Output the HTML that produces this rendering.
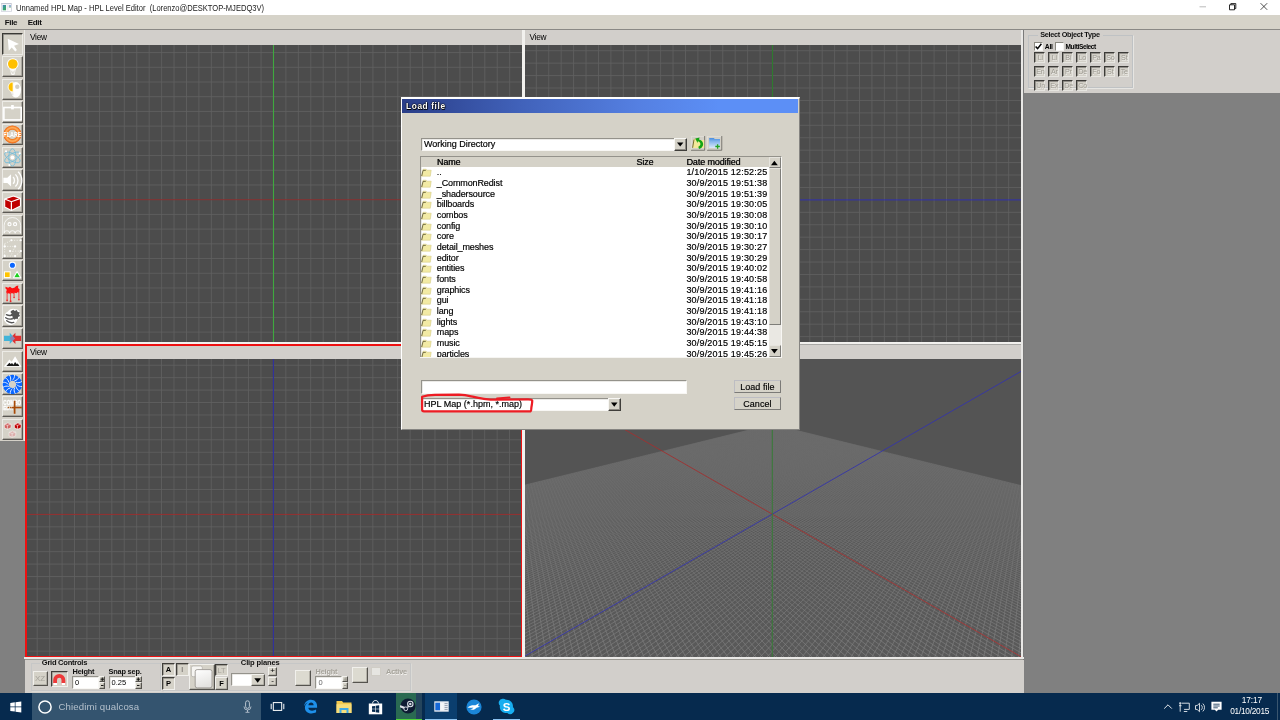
<!DOCTYPE html>
<html><head><meta charset="utf-8"><title>Unnamed HPL Map - HPL Level Editor</title>
<style>
*{box-sizing:border-box;margin:0;padding:0}
html,body{width:1280px;height:720px;overflow:hidden;background:#808080;font-family:"Liberation Sans",sans-serif;font-size:9px;color:#000}
body{position:relative}
.a{position:absolute}
.vp{position:absolute;display:block}
.face{background:#d4d0c8}
.t{position:absolute;white-space:pre;line-height:1}
.sunk{border:1px solid;border-color:#94928b #f8f7f4 #f8f7f4 #94928b;box-shadow:inset 0.5px 0.5px 0 #d8d6d0}
.rais{background:#d5d2c8;border:1px solid;border-color:#f8f7f4 #3f3e3a #3f3e3a #f8f7f4;box-shadow:inset -1px -1px 0 #8d8a83}
.hd{font-size:9px;letter-spacing:-0.12px;color:#111;text-shadow:0.35px 0 0 #111}
.rw{font-size:9px;letter-spacing:0.19px;color:#000;-webkit-text-stroke:0.18px #000}
.nm{letter-spacing:-0.12px}
.btn{background:#d6d3c9;border-style:solid;border-width:0.8px 1.3px 1.3px 0.8px;border-color:#bdbdc3 #7b7a77 #7b7a77 #bdbdc3;font-size:9px;text-align:center;line-height:12.300px;letter-spacing:0.050px;color:#000;-webkit-text-stroke:0.15px #000}
.tbr{background:#d5d2c8;border:1px solid;border-color:#ecebe6 #5a5853 #5a5853 #ecebe6;box-shadow:inset -0.7px -0.7px 0 #9a978f}
.tbp{background:#d5d2c8;border:1px solid;border-color:#3a3935 #ecebe6 #ecebe6 #3a3935;box-shadow:inset 0.7px 0.7px 0 #7d7b75}
.ob{width:11.200px;height:11.200px;background:#d2cfc7;border:1px solid;border-color:#3c3b38 #e6e5e0 #e6e5e0 #3c3b38;box-shadow:inset 0.7px 0.7px 0 #7d7b75;font-size:7.2px;line-height:10px;text-align:center;color:#9d9a92;letter-spacing:-0.2px;text-shadow:0.5px 0.5px 0 #efeeea;padding-left:1px}
.rb{background:#d5d2c8;border:1px solid;border-color:#f1f0ec #55534e #55534e #f1f0ec;box-shadow:inset -0.6px -0.6px 0 #9a978f}
.pb{background:#d5d2c8;border:1px solid;border-color:#3f3e3a #f1f0ec #f1f0ec #3f3e3a;box-shadow:inset 0.6px 0.6px 0 #8d8a83}
.lb{font-size:7.4px;font-weight:bold;letter-spacing:-0.2px;color:#111}
#root{position:absolute;left:0;top:0;width:1280px;height:720px;will-change:transform}
.sb{background:#d5d2c8;border-style:solid;border-width:0.7px 1.2px 1.2px 0.7px;border-color:#e6e4de #7e7d79 #7e7d79 #e6e4de}
.pb2{background:#d5d2c8;border-style:solid;border-width:1.300px 0.800px 0.800px 1.300px;border-color:#3f3e3a #f1f0ec #f1f0ec #3f3e3a;box-shadow:inset 0.700px 0.700px 0 #8d8a83}

</style></head><body><div id="root">
<div class="a" style="left:0;top:0;width:1280px;height:15px;background:#fff"></div>
<svg class="a" style="left:1px;top:2.800px" width="10.800" height="9" viewBox="0 0 10.800 9"><defs><linearGradient id="ig" x1="0" y1="0" x2="0.600" y2="1"><stop offset="0" stop-color="#4a78c0"/><stop offset="0.500" stop-color="#3a9a8a"/><stop offset="1" stop-color="#3aa860"/></linearGradient><linearGradient id="ig2" x1="0" y1="0" x2="0" y2="1"><stop offset="0" stop-color="#7a9ad8"/><stop offset="1" stop-color="#b8dcb0"/></linearGradient></defs><rect x="0.300" y="0.300" width="10.200" height="8.400" rx="0.600" fill="#fdfdfe" stroke="#c3c7d3" stroke-width="0.700"/><path d="M0.400 0.700h10" stroke="#b4b9c8" stroke-width="0.800"/><rect x="1.700" y="2" width="3.300" height="5.300" fill="url(#ig)"/><rect x="5.600" y="2" width="1.900" height="5.300" fill="#ececf0"/><rect x="7.900" y="2.200" width="2.100" height="2.700" fill="url(#ig2)"/></svg>
<div class="t" style="left:15.700px;top:3.500px;font-size:8.900px;transform:scaleX(0.853);transform-origin:0 0;color:#1a1a1a">Unnamed HPL Map - HPL Level Editor  (Lorenzo@DESKTOP-MJEDQ3V)</div>
<svg class="a" style="left:1195px;top:0" width="85" height="15" viewBox="0 0 85 15"><path d="M4.5 6.8H11" stroke="#aaa" stroke-width="0.8"/><path d="M34.5 4.8h5v5h-5zM35.8 4.8V3.6h5v5h-1.3" fill="none" stroke="#111" stroke-width="0.9"/><path d="M65.6 3.2l6.6 6.6M72.2 3.2l-6.6 6.6" stroke="#222" stroke-width="0.8"/></svg>
<div class="a" style="left:0;top:15px;width:1280px;height:15px;background:#d6d3c9"></div>
<div class="a" style="left:0;top:29px;width:1280px;height:1px;background:#8a8985"></div>
<div class="t" style="left:4.7px;top:19px;font-size:8px;font-weight:bold;letter-spacing:-0.3px;color:#111">File</div>
<div class="t" style="left:27.7px;top:19px;font-size:8px;font-weight:bold;letter-spacing:-0.3px;color:#111">Edit</div>
<!-- toolbar column -->
<div class="a face" style="left:0;top:30px;width:25px;height:411px"></div>
<div class="a" style="left:23.500px;top:30px;width:1.500px;height:411px;background:#e9e8e4"></div>
<!-- viewport headers -->
<div class="a" style="left:25px;top:30px;width:497px;height:15px;background:#d2cfcb"></div>
<div class="t" style="left:30px;top:32.700px;font-size:8.300px;letter-spacing:-0.300px">View</div>
<div class="a" style="left:522px;top:30px;width:3px;height:630px;background:#f2f1ee"></div>
<div class="a" style="left:525px;top:30px;width:496px;height:15px;background:#d2cfcb"></div>
<div class="t" style="left:529.5px;top:32.700px;font-size:8.300px;letter-spacing:-0.300px">View</div>
<div class="a" style="left:24px;top:342px;width:1000px;height:2px;background:#f2f1ee"></div>
<div class="a" style="left:525px;top:344px;width:496px;height:15px;background:#d2cfcb"></div>
<div class="a" style="left:525px;top:343.500px;width:496px;height:1px;background:#a9a8a5"></div>
<div class="t" style="left:529.5px;top:347.500px;font-size:8.300px;letter-spacing:-0.300px">View</div>
<!-- active viewport (red border) -->
<div class="a" style="left:25px;top:344px;width:497px;height:313px;background:#ee1111"></div>
<div class="a" style="left:27px;top:346px;width:494px;height:13px;background:#d2cfcb"></div>
<div class="t" style="left:30px;top:347.500px;font-size:8.300px;letter-spacing:-0.300px">View</div>
<!-- right strip -->
<div class="a" style="left:1021px;top:30px;width:3px;height:630px;background:#e9e8e6"></div>
<div class="a" style="left:1023px;top:30px;width:1px;height:630px;background:#7a7a7a"></div>
<div class="a" style="left:24px;top:657px;width:1000px;height:2px;background:#e9e8e6"></div>

<svg class="vp" style="left:25px;top:45px" width="497" height="297" viewBox="0 0 497 297"><rect width="497" height="297" fill="#4c4c4c"/><path d="M12.33 0V297M24.76 0V297M37.19 0V297M49.62 0V297M62.05 0V297M74.48 0V297M86.91 0V297M99.34 0V297M111.77 0V297M124.20 0V297M136.63 0V297M149.06 0V297M161.49 0V297M173.92 0V297M186.35 0V297M198.78 0V297M211.21 0V297M223.64 0V297M236.07 0V297M260.93 0V297M273.36 0V297M285.79 0V297M298.22 0V297M310.65 0V297M323.08 0V297M335.51 0V297M347.94 0V297M360.37 0V297M372.80 0V297M385.23 0V297M397.66 0V297M410.09 0V297M422.52 0V297M434.95 0V297M447.38 0V297M459.81 0V297M472.24 0V297M484.67 0V297M0 7.60H497M0 22.31H497M0 37.02H497M0 51.73H497M0 66.44H497M0 81.15H497M0 95.86H497M0 110.57H497M0 125.28H497M0 139.99H497M0 169.41H497M0 184.12H497M0 198.83H497M0 213.54H497M0 228.25H497M0 242.96H497M0 257.67H497M0 272.38H497M0 287.09H497" stroke="#616161" stroke-width="0.85" fill="none"/><path d="M0 154.70H497" stroke="#8c2f2f" stroke-width="0.9"/><path d="M248.50 0V297" stroke="#3fa83f" stroke-width="1.1"/></svg><svg class="vp" style="left:525px;top:45px" width="496" height="297" viewBox="0 0 496 297"><rect width="496" height="297" fill="#4c4c4c"/><path d="M11.33 0V297M23.76 0V297M36.19 0V297M48.62 0V297M61.05 0V297M73.48 0V297M85.91 0V297M98.34 0V297M110.77 0V297M123.20 0V297M135.63 0V297M148.06 0V297M160.49 0V297M172.92 0V297M185.35 0V297M197.78 0V297M210.21 0V297M222.64 0V297M235.07 0V297M259.93 0V297M272.36 0V297M284.79 0V297M297.22 0V297M309.65 0V297M322.08 0V297M334.51 0V297M346.94 0V297M359.37 0V297M371.80 0V297M384.23 0V297M396.66 0V297M409.09 0V297M421.52 0V297M433.95 0V297M446.38 0V297M458.81 0V297M471.24 0V297M483.67 0V297M0 5.74H496M0 18.17H496M0 30.60H496M0 43.03H496M0 55.46H496M0 67.89H496M0 80.32H496M0 92.75H496M0 105.18H496M0 117.61H496M0 130.04H496M0 142.47H496M0 167.33H496M0 179.76H496M0 192.19H496M0 204.62H496M0 217.05H496M0 229.48H496M0 241.91H496M0 254.34H496M0 266.77H496M0 279.20H496M0 291.63H496" stroke="#616161" stroke-width="0.85" fill="none"/><path d="M0 154.90H496" stroke="#2c2cb8" stroke-width="0.9"/><path d="M247.50 0V297" stroke="#2f7a2f" stroke-width="1.1"/></svg><svg class="vp" style="left:27px;top:359px" width="494" height="297" viewBox="0 0 494 297"><rect width="494" height="297" fill="#4c4c4c"/><path d="M10.23 0V297M22.66 0V297M35.09 0V297M47.52 0V297M59.95 0V297M72.38 0V297M84.81 0V297M97.24 0V297M109.67 0V297M122.10 0V297M134.53 0V297M146.96 0V297M159.39 0V297M171.82 0V297M184.25 0V297M196.68 0V297M209.11 0V297M221.54 0V297M233.97 0V297M258.83 0V297M271.26 0V297M283.69 0V297M296.12 0V297M308.55 0V297M320.98 0V297M333.41 0V297M345.84 0V297M358.27 0V297M370.70 0V297M383.13 0V297M395.56 0V297M407.99 0V297M420.42 0V297M432.85 0V297M445.28 0V297M457.71 0V297M470.14 0V297M482.57 0V297M0 6.24H494M0 18.67H494M0 31.10H494M0 43.53H494M0 55.96H494M0 68.39H494M0 80.82H494M0 93.25H494M0 105.68H494M0 118.11H494M0 130.54H494M0 142.97H494M0 167.83H494M0 180.26H494M0 192.69H494M0 205.12H494M0 217.55H494M0 229.98H494M0 242.41H494M0 254.84H494M0 267.27H494M0 279.70H494M0 292.13H494" stroke="#616161" stroke-width="0.85" fill="none"/><path d="M0 155.40H494" stroke="#a02c2c" stroke-width="0.9"/><path d="M246.40 0V297" stroke="#3030a0" stroke-width="1.1"/></svg><svg class="vp" style="left:525px;top:359px" width="496" height="298" viewBox="525 359 496 298"><defs><linearGradient id="gp" x1="0" y1="0" x2="0" y2="1"><stop offset="0" stop-color="#6e6e6e"/><stop offset="0.35" stop-color="#626262"/><stop offset="1" stop-color="#575757"/></linearGradient><linearGradient id="lg" gradientUnits="userSpaceOnUse" x1="0" y1="424" x2="0" y2="657"><stop offset="0" stop-color="#6a6a6a"/><stop offset="0.4" stop-color="#707070"/><stop offset="1" stop-color="#808080"/></linearGradient></defs><rect x="525" y="359" width="496" height="298" fill="#545454"/><polygon points="772.0,424.5 1137.1,514.0 1137.1,700 406.9,700 406.9,514.0" fill="#595959"/><path d="M772.0 424.5L520.0 486.3M772.0 424.5L1026.0 486.8M772.8 424.7L520.0 487.0M771.2 424.7L1026.0 487.5M773.6 424.9L520.0 487.8M770.4 424.9L1026.0 488.3M774.4 425.1L520.0 488.5M769.6 425.1L1026.0 489.0M775.2 425.3L520.0 489.3M768.8 425.3L1026.0 489.8M776.0 425.5L520.0 490.1M768.0 425.5L1026.0 490.6M776.8 425.7L520.0 490.8M767.2 425.7L1026.0 491.3M777.6 425.9L520.0 491.6M766.4 425.9L1026.0 492.1M778.4 426.1L520.0 492.4M765.6 426.1L1026.0 493.0M779.2 426.3L520.0 493.3M764.8 426.3L1026.0 493.8M780.0 426.5L520.0 494.1M764.0 426.5L1026.0 494.6M780.9 426.7L520.0 494.9M763.1 426.7L1026.0 495.4M781.7 426.9L520.0 495.8M762.3 426.9L1026.0 496.3M782.5 427.1L520.0 496.6M761.5 427.1L1026.0 497.1M783.4 427.3L520.0 497.5M760.6 427.3L1026.0 498.0M784.2 427.5L520.0 498.3M759.8 427.5L1026.0 498.9M785.1 427.7L520.0 499.2M758.9 427.7L1026.0 499.8M786.0 427.9L520.0 500.1M758.0 427.9L1026.0 500.7M786.8 428.1L520.0 501.0M757.2 428.1L1026.0 501.6M787.7 428.3L520.0 502.0M756.3 428.3L1026.0 502.5M788.6 428.6L520.0 502.9M755.4 428.6L1026.0 503.4M789.4 428.8L520.0 503.8M754.6 428.8L1026.0 504.4M790.3 429.0L520.0 504.8M753.7 429.0L1026.0 505.4M791.2 429.2L520.0 505.8M752.8 429.2L1026.0 506.3M792.1 429.4L520.0 506.8M751.9 429.4L1026.0 507.3M793.0 429.6L520.0 507.7M751.0 429.6L1026.0 508.3M793.9 429.9L520.0 508.8M750.1 429.9L1026.0 509.3M794.8 430.1L520.0 509.8M749.2 430.1L1026.0 510.4M795.8 430.3L520.0 510.8M748.2 430.3L1026.0 511.4M796.7 430.5L520.0 511.9M747.3 430.5L1026.0 512.5M797.6 430.8L520.0 512.9M746.4 430.8L1026.0 513.5M798.6 431.0L520.0 514.0M745.4 431.0L1026.0 514.6M799.5 431.2L520.0 515.1M744.5 431.2L1026.0 515.7M800.5 431.5L520.0 516.2M743.5 431.5L1026.0 516.8M801.4 431.7L520.0 517.3M742.6 431.7L1026.0 518.0M802.4 431.9L520.0 518.5M741.6 431.9L1026.0 519.1M803.3 432.2L520.0 519.7M740.7 432.2L1026.0 520.3M804.3 432.4L520.0 520.8M739.7 432.4L1026.0 521.4M805.3 432.7L520.0 522.0M738.7 432.7L1026.0 522.6M806.3 432.9L520.0 523.2M737.7 432.9L1026.0 523.9M807.3 433.1L520.0 524.5M736.7 433.1L1026.0 525.1M808.3 433.4L520.0 525.7M735.7 433.4L1026.0 526.3M809.3 433.6L520.0 527.0M734.7 433.6L1026.0 527.6M810.3 433.9L520.0 528.3M733.7 433.9L1026.0 528.9M811.3 434.1L520.0 529.6M732.7 434.1L1026.0 530.2M812.3 434.4L520.0 530.9M731.7 434.4L1026.0 531.6M813.4 434.6L520.0 532.2M730.6 434.6L1026.0 532.9M814.4 434.9L520.0 533.6M729.6 434.9L1026.0 534.3M815.4 435.1L520.0 535.0M728.6 435.1L1026.0 535.7M816.5 435.4L520.0 536.4M727.5 435.4L1026.0 537.1M817.6 435.7L520.0 537.8M726.4 435.7L1026.0 538.5M818.6 435.9L520.0 539.3M725.4 435.9L1026.0 540.0M819.7 436.2L520.0 540.8M724.3 436.2L1026.0 541.5M820.8 436.5L520.0 542.3M723.2 436.5L1026.0 543.0M821.9 436.7L520.0 543.8M722.1 436.7L1026.0 544.5M823.0 437.0L520.0 545.4M721.0 437.0L1026.0 546.1M824.1 437.3L520.0 546.9M719.9 437.3L1026.0 547.7M825.2 437.5L520.0 548.6M718.8 437.5L1026.0 549.3M826.3 437.8L520.0 550.2M717.7 437.8L1026.0 550.9M827.4 438.1L520.0 551.9M716.6 438.1L1026.0 552.6M828.6 438.4L520.0 553.5M715.4 438.4L1026.0 554.3M829.7 438.6L520.0 555.3M714.3 438.6L1026.0 556.0M830.9 438.9L520.0 557.0M713.1 438.9L1026.0 557.8M832.0 439.2L520.0 558.8M712.0 439.2L1026.0 559.6M833.2 439.5L520.0 560.6M710.8 439.5L1026.0 561.4M834.3 439.8L520.0 562.5M709.7 439.8L1026.0 563.3M835.5 440.1L520.0 564.4M708.5 440.1L1026.0 565.1M836.7 440.4L520.0 566.3M707.3 440.4L1026.0 567.1M837.9 440.7L520.0 568.2M706.1 440.7L1026.0 569.0M839.1 441.0L520.0 570.2M704.9 441.0L1026.0 571.0M840.3 441.2L520.0 572.2M703.7 441.2L1026.0 573.1M841.6 441.5L520.0 574.3M702.4 441.5L1026.0 575.1M842.8 441.9L520.0 576.4M701.2 441.9L1026.0 577.3M844.0 442.2L520.0 578.6M700.0 442.2L1026.0 579.4M845.3 442.5L520.0 580.8M698.7 442.5L1026.0 581.6M846.6 442.8L520.0 583.0M697.4 442.8L1026.0 583.9M847.8 443.1L520.0 585.3M696.2 443.1L1026.0 586.2M849.1 443.4L520.0 587.6M694.9 443.4L1026.0 588.5M850.4 443.7L520.0 590.0M693.6 443.7L1026.0 590.9M851.7 444.0L520.0 592.4M692.3 444.0L1026.0 593.3M853.0 444.4L520.0 594.9M691.0 444.4L1026.0 595.8M854.3 444.7L520.0 597.4M689.7 444.7L1026.0 598.3M855.7 445.0L520.0 600.0M688.3 445.0L1026.0 600.9M857.0 445.3L520.0 602.7M687.0 445.3L1026.0 603.6M858.3 445.7L520.0 605.4M685.7 445.7L1026.0 606.3M859.7 446.0L520.0 608.1M684.3 446.0L1026.0 609.1M861.1 446.3L520.0 610.9M682.9 446.3L1026.0 611.9M862.4 446.7L520.0 613.8M681.6 446.7L1026.0 614.8M863.8 447.0L520.0 616.8M680.2 447.0L1026.0 617.8M865.2 447.3L520.0 619.8M678.8 447.3L1026.0 620.8M866.6 447.7L520.0 622.9M677.4 447.7L1026.0 623.9M868.1 448.0L520.0 626.1M675.9 448.0L1026.0 627.1M869.5 448.4L520.0 629.3M674.5 448.4L1026.0 630.3M870.9 448.7L520.0 632.6M673.1 448.7L1026.0 633.7M872.4 449.1L520.0 636.0M671.6 449.1L1026.0 637.1M873.9 449.5L520.0 639.5M670.1 449.5L1026.0 640.6M875.3 449.8L520.0 643.1M668.7 449.8L1026.0 644.2M876.8 450.2L520.0 646.8M667.2 450.2L1026.0 647.9M878.3 450.6L520.0 650.6M665.7 450.6L1026.0 651.7M879.9 450.9L520.0 654.4M664.1 450.9L1026.0 655.6M881.4 451.3L520.0 658.4M662.6 451.3L1026.0 659.5M882.9 451.7L520.8 662.0M661.1 451.7L1023.2 662.0M884.5 452.1L527.9 662.0M659.5 452.1L1016.1 662.0M886.0 452.4L535.0 662.0M658.0 452.4L1009.0 662.0M887.6 452.8L542.1 662.0M656.4 452.8L1001.9 662.0M889.2 453.2L549.2 662.0M654.8 453.2L994.8 662.0M890.8 453.6L556.3 662.0M653.2 453.6L987.7 662.0M892.4 454.0L563.4 662.0M651.6 454.0L980.6 662.0M894.0 454.4L570.6 662.0M650.0 454.4L973.4 662.0M895.7 454.8L577.7 662.0M648.3 454.8L966.3 662.0M897.3 455.2L584.8 662.0M646.7 455.2L959.2 662.0M899.0 455.6L591.9 662.0M645.0 455.6L952.1 662.0M900.7 456.0L599.0 662.0M643.3 456.0L945.0 662.0M902.4 456.5L606.1 662.0M641.6 456.5L937.9 662.0M904.1 456.9L613.2 662.0M639.9 456.9L930.8 662.0M905.8 457.3L620.3 662.0M638.2 457.3L923.7 662.0M907.6 457.7L627.4 662.0M636.4 457.7L916.6 662.0M909.3 458.2L634.5 662.0M634.7 458.2L909.5 662.0M911.1 458.6L641.6 662.0M632.9 458.6L902.4 662.0M912.9 459.0L648.7 662.0M631.1 459.0L895.3 662.0M914.7 459.5L655.8 662.0M629.3 459.5L888.2 662.0M916.5 459.9L662.9 662.0M627.5 459.9L881.1 662.0M918.3 460.4L670.0 662.0M625.7 460.4L874.0 662.0M920.2 460.8L677.1 662.0M623.8 460.8L866.9 662.0M922.1 461.3L684.2 662.0M621.9 461.3L859.8 662.0M923.9 461.7L691.4 662.0M620.1 461.7L852.6 662.0M925.8 462.2L698.5 662.0M618.2 462.2L845.5 662.0M927.8 462.7L705.6 662.0M616.2 462.7L838.4 662.0M929.7 463.2L712.7 662.0M614.3 463.2L831.3 662.0M931.7 463.6L719.8 662.0M612.3 463.6L824.2 662.0M933.6 464.1L726.9 662.0M610.4 464.1L817.1 662.0M935.6 464.6L734.0 662.0M608.4 464.6L810.0 662.0M937.6 465.1L741.1 662.0M606.4 465.1L802.9 662.0M939.6 465.6L748.2 662.0M604.4 465.6L795.8 662.0M941.7 466.1L755.3 662.0M602.3 466.1L788.7 662.0M943.8 466.6L762.4 662.0M600.2 466.6L781.6 662.0M945.8 467.1L769.5 662.0M598.2 467.1L774.5 662.0M947.9 467.6L776.6 662.0M596.1 467.6L767.4 662.0M950.1 468.1L783.7 662.0M593.9 468.1L760.3 662.0M952.2 468.7L790.8 662.0M591.8 468.7L753.2 662.0M954.4 469.2L797.9 662.0M589.6 469.2L746.1 662.0M956.5 469.7L805.1 662.0M587.5 469.7L738.9 662.0M958.8 470.3L812.2 662.0M585.2 470.3L731.8 662.0M961.0 470.8L819.3 662.0M583.0 470.8L724.7 662.0M963.2 471.4L826.4 662.0M580.8 471.4L717.6 662.0M965.5 471.9L833.5 662.0M578.5 471.9L710.5 662.0M967.8 472.5L840.6 662.0M576.2 472.5L703.4 662.0M970.1 473.1L847.7 662.0M573.9 473.1L696.3 662.0M972.4 473.6L854.8 662.0M571.6 473.6L689.2 662.0M974.8 474.2L861.9 662.0M569.2 474.2L682.1 662.0M977.2 474.8L869.0 662.0M566.8 474.8L675.0 662.0M979.6 475.4L876.1 662.0M564.4 475.4L667.9 662.0M982.0 476.0L883.2 662.0M562.0 476.0L660.8 662.0M984.5 476.6L890.3 662.0M559.5 476.6L653.7 662.0M987.0 477.2L897.4 662.0M557.0 477.2L646.6 662.0M989.5 477.8L904.5 662.0M554.5 477.8L639.5 662.0M992.0 478.4L911.6 662.0M552.0 478.4L632.4 662.0M994.6 479.1L918.7 662.0M549.4 479.1L625.3 662.0M997.2 479.7L925.9 662.0M546.8 479.7L618.1 662.0M999.8 480.3L933.0 662.0M544.2 480.3L611.0 662.0M1002.4 481.0L940.1 662.0M541.6 481.0L603.9 662.0M1005.1 481.6L947.2 662.0M538.9 481.6L596.8 662.0M1007.8 482.3L954.3 662.0M536.2 482.3L589.7 662.0M1010.5 483.0L961.4 662.0M533.5 483.0L582.6 662.0M1013.3 483.6L968.5 662.0M530.7 483.6L575.5 662.0M1016.1 484.3L975.6 662.0M527.9 484.3L568.4 662.0M1018.9 485.0L982.7 662.0M525.1 485.0L561.3 662.0M1021.7 485.7L989.8 662.0M522.3 485.7L554.2 662.0M1024.6 486.4L996.9 662.0M520.0 490.2L547.1 662.0M1026.0 498.3L1004.0 662.0M520.0 513.2L540.0 662.0M1026.0 528.0L1011.1 662.0M520.0 546.0L532.9 662.0M1026.0 573.4L1018.2 662.0M520.0 596.2L525.8 662.0M1026.0 651.7L1025.3 662.0" stroke="url(#lg)" stroke-width="0.67" fill="none"/><path d="M525 372.4L1021 656.7" stroke="#a03030" stroke-width="0.9"/><path d="M525 656L1021 371.4" stroke="#3434a8" stroke-width="0.9"/><path d="M772.3 359V657" stroke="#3a7a3a" stroke-width="1.1"/></svg>
<div class="a tbp" style="left:2.2px;top:33.30px;width:20.8px;height:21.400000000000002px"></div>
<svg class="a" style="left:2.2px;top:33.60px" width="20.8" height="20.8" viewBox="0 0 31 31"><path d="M8.6 7.100L25.300 14.900L18 17.500L22.200 23.800L19.800 25.900L14.500 20.100L10.100 24.800Z" fill="#fff"/></svg>
<div class="a tbr" style="left:2.2px;top:55.97px;width:20.8px;height:21.400000000000002px"></div>
<svg class="a" style="left:2.2px;top:56.27px" width="20.8" height="20.8" viewBox="0 0 31 31"><path d="M11.200 18.500h9.900l-2.600 9.800h-4.500z" fill="#fbfaf7"/><path d="M12.500 21l5.500 6.500M19.800 21l-5.500 6.500M12 24h8" stroke="#d9d6cd" stroke-width="0.9"/><circle cx="16.100" cy="11.900" r="8.700" fill="#fff"/><circle cx="16.100" cy="11.900" r="7.200" fill="#ffc000"/></svg>
<div class="a tbr" style="left:2.2px;top:78.64px;width:20.8px;height:21.400000000000002px"></div>
<svg class="a" style="left:2.2px;top:78.94px" width="20.8" height="20.8" viewBox="0 0 31 31"><ellipse cx="20.600" cy="16" rx="7.800" ry="11.600" fill="#fff"/><circle cx="22.800" cy="11.600" r="3.300" fill="#d2cec6"/><path d="M16.600 4.400A7.500 7.500 0 0 0 16.600 19.400Z" fill="#ffc000" stroke="#fff" stroke-width="1.200"/><path d="M13 21h4M13 23.500h4" stroke="#d2cec6" stroke-width="1"/></svg>
<div class="a tbr" style="left:2.2px;top:101.31px;width:20.8px;height:21.400000000000002px"></div>
<svg class="a" style="left:2.2px;top:101.61px" width="20.8" height="20.8" viewBox="0 0 31 31"><rect x="2.800" y="8.200" width="25.800" height="18.500" fill="none" stroke="#fff" stroke-width="2.400"/><rect x="13.6" y="4.5" width="4" height="6.5" fill="#fff"/></svg>
<div class="a tbr" style="left:2.2px;top:123.98px;width:20.8px;height:21.400000000000002px"></div>
<svg class="a" style="left:2.2px;top:124.28px" width="20.8" height="20.8" viewBox="0 0 31 31"><defs><radialGradient id="fl" gradientUnits="userSpaceOnUse" cx="15.500" cy="15.500" r="14"><stop offset="0.480" stop-color="#f06a08"/><stop offset="0.720" stop-color="#ffb261"/><stop offset="0.960" stop-color="#ee5a00"/></radialGradient></defs><circle cx="15.500" cy="15.500" r="10.200" fill="none" stroke="url(#fl)" stroke-width="6.400"/><text x="15.500" y="19.800" font-family="Liberation Sans,sans-serif" font-weight="bold" font-size="11.500" fill="#fff" text-anchor="middle" textLength="27" lengthAdjust="spacingAndGlyphs">FLARE</text></svg>
<div class="a tbr" style="left:2.2px;top:146.65px;width:20.8px;height:21.400000000000002px"></div>
<svg class="a" style="left:2.2px;top:146.95px" width="20.8" height="20.8" viewBox="0 0 31 31"><g fill="none" stroke="#6cbcdc" stroke-width="1.150"><ellipse cx="15.500" cy="15.500" rx="5.400" ry="13"/><ellipse cx="15.500" cy="15.500" rx="5.400" ry="13" transform="rotate(60 15.500 15.500)"/><ellipse cx="15.500" cy="15.500" rx="5.400" ry="13" transform="rotate(-60 15.500 15.500)"/></g><circle cx="15.500" cy="15.500" r="3" fill="#fff"/><circle cx="6" cy="6.500" r="1.600" fill="#fff"/><circle cx="26.500" cy="9.500" r="1.600" fill="#fff"/><circle cx="11" cy="27" r="1.600" fill="#fff"/></svg>
<div class="a tbr" style="left:2.2px;top:169.32px;width:20.8px;height:21.400000000000002px"></div>
<svg class="a" style="left:2.2px;top:169.62px" width="20.8" height="20.8" viewBox="0 0 31 31"><path d="M2 11.5h6L13.5 6.5v18L8 19.5H2z" fill="#fff"/><g fill="none" stroke="#fff" stroke-width="2"><path d="M16.5 10.5a7 7 0 0 1 0 10"/><path d="M20 6.5a12.5 12.5 0 0 1 0 18"/><path d="M24 2.5a18 18 0 0 1 0 26"/></g></svg>
<div class="a tbr" style="left:2.2px;top:191.99px;width:20.8px;height:21.400000000000002px"></div>
<svg class="a" style="left:2.2px;top:192.29px" width="20.8" height="20.8" viewBox="0 0 31 31"><path d="M4 10.5L17 6L27.5 9.5V21L14 27.5L4 22.5z" fill="#c00000" stroke="#fff" stroke-width="1.6" stroke-linejoin="round"/><path d="M4 10.5L14 14.5L27.5 9.5M14 14.5V27.5" fill="none" stroke="#fff" stroke-width="1.8"/></svg>
<div class="a tbr" style="left:2.2px;top:214.66px;width:20.8px;height:21.400000000000002px"></div>
<svg class="a" style="left:2.2px;top:214.96px" width="20.8" height="20.8" viewBox="0 0 31 31"><path d="M3.200 27.200V15.500a12.300 11.700 0 0 1 24.600 0V27.200a4.100 3.800 0 0 0-8.200 0a4.100 3.800 0 0 0-8.200 0a4.100 3.800 0 0 0-8.200 0z" fill="none" stroke="#fff" stroke-width="1.150"/><circle cx="11.200" cy="13.700" r="2.300" fill="none" stroke="#fff" stroke-width="1.700"/><circle cx="19.500" cy="13.700" r="2.300" fill="none" stroke="#fff" stroke-width="1.700"/></svg>
<div class="a tbr" style="left:2.2px;top:237.33px;width:20.8px;height:21.400000000000002px"></div>
<svg class="a" style="left:2.2px;top:237.63px" width="20.8" height="20.8" viewBox="0 0 31 31"><g stroke="#f4f3ee" stroke-width="1.3" stroke-dasharray="1.6 2.2" fill="none"><path d="M4 8.5L14 3.5H28.5M4 8.5V27M4 12.5h15.5M12 19.5h16.5M4 27h15.5l9-7.5M19.5 12.5L13 27"/></g><g fill="#fff"><circle cx="4" cy="12.5" r="1.7"/><circle cx="19.5" cy="12.5" r="1.7"/><circle cx="12" cy="19.5" r="1.7"/><circle cx="28" cy="19.5" r="1.7"/><circle cx="4" cy="27" r="1.7"/><circle cx="19.5" cy="27" r="1.7"/><circle cx="14" cy="3.5" r="1.5"/><circle cx="28" cy="3.5" r="1.5"/></g></svg>
<div class="a tbr" style="left:2.2px;top:260.00px;width:20.8px;height:21.400000000000002px"></div>
<svg class="a" style="left:2.2px;top:260.30px" width="20.8" height="20.8" viewBox="0 0 31 31"><circle cx="15.5" cy="7.8" r="4.6" fill="#0a66ff" stroke="#fff" stroke-width="1.6"/><rect x="3.6" y="17.6" width="8.6" height="8.6" fill="#ffc400" stroke="#fff" stroke-width="1.5"/><path d="M22.5 17.2L28 26.5H17z" fill="#1fd11f" stroke="#fff" stroke-width="1.6" stroke-linejoin="round"/></svg>
<div class="a tbr" style="left:2.2px;top:282.67px;width:20.8px;height:21.400000000000002px"></div>
<svg class="a" style="left:2.2px;top:282.97px" width="20.8" height="20.8" viewBox="0 0 31 31"><path d="M5.200 5.500l4 1.600 2.600-1.400 3.200 2.200 3.400-.8 2.800-2.800 3.200-.6-.6 3.600 2.400 2.200-.8 4.600-2.400-.4-1.400 1.600-2.600-.8-1.600 1.400-2.800-1-2 1.400-2.600-1.200-2.200 1-1.600-2.600 1-3.400-2-1.800z" fill="#ff1212"/><path d="M7.600 14V25.500M12.800 14V26.500M18 14V21M25.200 13V24.500" stroke="#f23434" stroke-width="1.300" stroke-linecap="round"/><g fill="#f02a2a"><circle cx="7.600" cy="26" r="1.300"/><circle cx="12.800" cy="27.200" r="1.400"/><circle cx="18" cy="21.600" r="1.200"/><circle cx="25.200" cy="25" r="1.200"/></g></svg>
<div class="a tbr" style="left:2.2px;top:305.34px;width:20.8px;height:21.400000000000002px"></div>
<svg class="a" style="left:2.2px;top:305.64px" width="20.8" height="20.8" viewBox="0 0 31 31"><path d="M8 9c3-4 8-6 12-4 4 0 7 3 7 7 1 4-1 7-4 8-1 4-4 7-8 8-4 1-8-1-10-4-3-3-3-7-1-10 0-2 2-4 4-5z" fill="#fff"/><path d="M14 7l3-1.500 2 2 3-1.500 1.500 3 3 .5-1 3 1.500 2.500-3 1.500-.5 3-3-.5-2 1.500-2.500-2-.5-3.500-3-1.500 2-2.500-2-2z" fill="#555"/><path d="M6.500 13c3 1.500 6 1.500 8.500 .5M5.500 17.500c3 2 7 2.500 10 1.500M7 22c3 2.500 7 3.500 10.500 2.500" stroke="#555" stroke-width="2" fill="none" stroke-linecap="round"/></svg>
<div class="a tbr" style="left:2.2px;top:328.01px;width:20.8px;height:21.400000000000002px"></div>
<svg class="a" style="left:2.2px;top:328.31px" width="20.8" height="20.8" viewBox="0 0 31 31"><path d="M3 11.500h8.500V7l8 8.500-8 8.500v-4.500H3z" fill="#42b4d8"/><path d="M28.500 11.500h-8.500V7l-8 8.500 8 8.500v-4.500h8.500z" fill="#e03030"/><path d="M15.500 11.200l4 4.300-4 4.300-4-4.300z" fill="#8a84b0"/></svg>
<div class="a tbr" style="left:2.2px;top:350.68px;width:20.8px;height:21.400000000000002px"></div>
<svg class="a" style="left:2.2px;top:350.98px" width="20.8" height="20.8" viewBox="0 0 31 31"><path d="M2.500 23.500L11 12.500l3.500 3.700L19.500 8l9.500 15.500z" fill="#fff"/><path d="M6.500 22.500l4.500-5 2 2 2-1.500 2 2.500 2.500-4 2.500 3 1.500-1 2.500 4z" fill="#1a1a1a"/></svg>
<div class="a tbr" style="left:2.2px;top:373.35px;width:20.8px;height:21.400000000000002px"></div>
<svg class="a" style="left:2.2px;top:373.65px" width="20.8" height="20.8" viewBox="0 0 31 31"><circle cx="15.500" cy="15.500" r="10" fill="none" stroke="#0a66ff" stroke-width="9"/><g stroke="#fff" stroke-width="1.2" fill="none"><path d="M15.500 9.300c2.400-2 3.400-4.800 3.200-8.200" transform="rotate(0 15.500 15.500)"/><path d="M15.500 9.300c2.400-2 3.400-4.800 3.200-8.200" transform="rotate(30 15.500 15.500)"/><path d="M15.500 9.300c2.400-2 3.400-4.800 3.200-8.200" transform="rotate(60 15.500 15.500)"/><path d="M15.500 9.300c2.400-2 3.400-4.800 3.200-8.200" transform="rotate(90 15.500 15.500)"/><path d="M15.500 9.300c2.400-2 3.400-4.800 3.200-8.200" transform="rotate(120 15.500 15.500)"/><path d="M15.500 9.300c2.400-2 3.400-4.800 3.200-8.200" transform="rotate(150 15.500 15.500)"/><path d="M15.500 9.300c2.400-2 3.400-4.800 3.200-8.200" transform="rotate(180 15.500 15.500)"/><path d="M15.500 9.300c2.400-2 3.400-4.800 3.200-8.200" transform="rotate(210 15.500 15.500)"/><path d="M15.500 9.300c2.400-2 3.400-4.800 3.200-8.200" transform="rotate(240 15.500 15.500)"/><path d="M15.500 9.300c2.400-2 3.400-4.800 3.200-8.200" transform="rotate(270 15.500 15.500)"/><path d="M15.500 9.300c2.400-2 3.400-4.800 3.200-8.200" transform="rotate(300 15.500 15.500)"/><path d="M15.500 9.300c2.400-2 3.400-4.800 3.200-8.200" transform="rotate(330 15.500 15.500)"/></g></svg>
<div class="a tbr" style="left:2.2px;top:396.02px;width:20.8px;height:21.400000000000002px"></div>
<svg class="a" style="left:2.2px;top:396.32px" width="20.8" height="20.8" viewBox="0 0 31 31"><text x="2" y="13.200" font-family="Liberation Sans,sans-serif" font-weight="bold" font-size="10.500" fill="#fff" stroke="#fff" stroke-width="0.500" textLength="26.500" lengthAdjust="spacingAndGlyphs">COMBO</text><text x="2" y="21.600" font-family="Liberation Sans,sans-serif" font-weight="bold" font-size="9" fill="#fff" stroke="#fff" stroke-width="0.400" textLength="15" lengthAdjust="spacingAndGlyphs">EDIT</text><path d="M18.800 7V26.500" stroke="#a84a08" stroke-width="2.600" fill="none"/><path d="M14 17.200h15.500" stroke="#a84a08" stroke-width="2.400" fill="none"/><path d="M8.500 17.200h5.500" stroke="#a84a08" stroke-width="2.200" stroke-dasharray="1.800 1.200" fill="none"/></svg>
<div class="a tbr" style="left:2.2px;top:418.69px;width:20.8px;height:21.400000000000002px"></div>
<svg class="a" style="left:2.2px;top:418.99px" width="20.8" height="20.8" viewBox="0 0 31 31"><g transform="translate(3.5 5)" opacity="0.85"><path d="M0 2.800L5.200 1 10 2.600V8L4.600 10.400 0 8.200z" fill="#d05050" stroke="#fff" stroke-width="0.900" stroke-linejoin="round"/><path d="M0 2.800l4.600 1.700L10 2.600M4.600 4.500v5.900" fill="none" stroke="#fff" stroke-width="0.900"/></g><g transform="translate(18.5 5)" opacity="1"><path d="M0 2.800L5.200 1 10 2.600V8L4.600 10.400 0 8.200z" fill="#c00000" stroke="#fff" stroke-width="0.900" stroke-linejoin="round"/><path d="M0 2.800l4.600 1.700L10 2.600M4.600 4.500v5.900" fill="none" stroke="#fff" stroke-width="0.900"/></g><g transform="translate(10.5 17)" opacity="0.7"><path d="M0 2.800L5.200 1 10 2.600V8L4.600 10.400 0 8.200z" fill="#e0a0a0" stroke="#fff" stroke-width="0.900" stroke-linejoin="round"/><path d="M0 2.800l4.600 1.700L10 2.600M4.600 4.500v5.900" fill="none" stroke="#fff" stroke-width="0.900"/></g></svg>
<div class="a" style="left:400.800px;top:97px;width:399.600px;height:333px;background:#d5d2c8;border-style:solid;border-width:2px 1px 1px 1.500px;border-color:#ffffff #858481 #858481 #ffffff"></div>
<div class="a" style="left:402.300px;top:99px;width:395.700px;height:14px;background:linear-gradient(90deg,#2a3e88 0%,#4162ba 30%,#5580e2 60%,#5c8ff6 80%,#5c8ff6 100%)"></div>
<div class="t" style="left:406px;top:101.5px;font-size:8.3px;font-weight:bold;letter-spacing:0.62px;color:#fff;text-shadow:0 0 1px #000,0 0 1px #000,0 0 1.5px #000,0.5px 0.5px 0 #000">Load file</div>
<div class="a sunk" style="left:421px;top:137.5px;width:255px;height:13.5px;background:#fff"></div>
<div class="t" style="left:424px;top:140.200px;font-size:9px;-webkit-text-stroke:0.18px #000">Working Directory</div>
<div class="a rais" style="left:674.300px;top:137.500px;width:12.400px;height:13px"></div>
<svg class="a" style="left:674.300px;top:138px" width="12.400" height="12" viewBox="0 0 12.400 12"><path d="M3 4.400h6.400L6.200 8.600z" fill="#000"/></svg>
<svg class="a" style="left:690.900px;top:136px" width="32" height="15" viewBox="0 0 32 15"><defs><linearGradient id="bf" x1="0" y1="0" x2="0" y2="1"><stop offset="0" stop-color="#4a8ee0"/><stop offset="0.35" stop-color="#86b6ec"/><stop offset="1" stop-color="#dbe9f8"/></linearGradient></defs><rect x="0" y="0" width="14" height="14.600" fill="#d3d0c7"/><path d="M0.300 14.300V0.300H13.700" fill="none" stroke="#eceae5" stroke-width="0.600"/><path d="M13.650 0V14.250H0" fill="none" stroke="#55534e" stroke-width="0.700"/><path d="M1.300 12L2.700 3H6.400L7 4H13.200V12z" fill="#f3e99a"/><path d="M1.600 11.800L3 3.600" stroke="#6a6126" stroke-width="0.900"/><path d="M2.900 3.200H6.200" stroke="#b5a94e" stroke-width="0.500"/><path d="M4.300 2.600L8.600 1.600L8 3.400C11.600 4.400 13 7.400 11.700 10.100C11 11.700 9.700 12.700 8 12.900L7.300 10.700C9 10.100 9.700 8.700 9.300 7.300C8.900 6.100 8.100 5.500 6.900 5.300L6.500 7z" fill="#14a514"/><rect x="16.100" y="0" width="15" height="14.600" fill="#d3d0c7"/><path d="M16.400 14.300V0.300H30.800" fill="none" stroke="#eceae5" stroke-width="0.600"/><path d="M30.750 0V14.250H16.100" fill="none" stroke="#55534e" stroke-width="0.700"/><path d="M18.200 12V2.100H23L23.600 2.900H29V12z" fill="url(#bf)"/><path d="M26.600 8.200V12.800M24.300 10.500H28.900" stroke="#22a322" stroke-width="1.300"/></svg>
<div class="a sunk" style="left:420px;top:155.500px;width:362.200px;height:202.500px;background:#fff"></div>
<div class="a" style="left:421px;top:156.500px;width:348.300px;height:10.500px;background:#d5d2c8"></div>
<div class="t hd" style="left:436.8px;top:158.2px">Name</div>
<div class="t hd" style="left:636.3px;top:158.2px">Size</div>
<div class="t hd" style="left:686.4px;top:158.2px">Date modified</div>
<svg class="a" style="left:420.500px;top:168.4px" width="11" height="9" viewBox="0 0 11 9"><path d="M0.500 8.200L2 1.200H5.200L5.800 2.200H10.200L9.300 8.200z" fill="#f2eaa4" stroke="#cfc47a" stroke-width="0.5"/><path d="M0.700 8L2.100 2.400H4.800" fill="none" stroke="#4f4a2a" stroke-width="0.75"/></svg>
<div class="t rw nm" style="left:436.8px;top:168.40px">..</div>
<div class="t rw" style="left:686.4px;top:168.40px">1/10/2015 12:52:25</div>
<svg class="a" style="left:420.500px;top:179.07px" width="11" height="9" viewBox="0 0 11 9"><path d="M0.500 8.200L2 1.200H5.200L5.800 2.200H10.200L9.300 8.200z" fill="#f2eaa4" stroke="#cfc47a" stroke-width="0.5"/><path d="M0.700 8L2.100 2.400H4.800" fill="none" stroke="#4f4a2a" stroke-width="0.75"/></svg>
<div class="t rw nm" style="left:436.8px;top:179.07px">_CommonRedist</div>
<div class="t rw" style="left:686.4px;top:179.07px">30/9/2015 19:51:38</div>
<svg class="a" style="left:420.500px;top:189.73px" width="11" height="9" viewBox="0 0 11 9"><path d="M0.500 8.200L2 1.200H5.200L5.800 2.200H10.200L9.300 8.200z" fill="#f2eaa4" stroke="#cfc47a" stroke-width="0.5"/><path d="M0.700 8L2.100 2.400H4.800" fill="none" stroke="#4f4a2a" stroke-width="0.75"/></svg>
<div class="t rw nm" style="left:436.8px;top:189.73px">_shadersource</div>
<div class="t rw" style="left:686.4px;top:189.73px">30/9/2015 19:51:39</div>
<svg class="a" style="left:420.500px;top:200.4px" width="11" height="9" viewBox="0 0 11 9"><path d="M0.500 8.200L2 1.200H5.200L5.800 2.200H10.200L9.300 8.200z" fill="#f2eaa4" stroke="#cfc47a" stroke-width="0.5"/><path d="M0.700 8L2.100 2.400H4.800" fill="none" stroke="#4f4a2a" stroke-width="0.75"/></svg>
<div class="t rw nm" style="left:436.8px;top:200.40px">billboards</div>
<div class="t rw" style="left:686.4px;top:200.40px">30/9/2015 19:30:05</div>
<svg class="a" style="left:420.500px;top:211.07px" width="11" height="9" viewBox="0 0 11 9"><path d="M0.500 8.200L2 1.200H5.200L5.800 2.200H10.200L9.300 8.200z" fill="#f2eaa4" stroke="#cfc47a" stroke-width="0.5"/><path d="M0.700 8L2.100 2.400H4.800" fill="none" stroke="#4f4a2a" stroke-width="0.75"/></svg>
<div class="t rw nm" style="left:436.8px;top:211.07px">combos</div>
<div class="t rw" style="left:686.4px;top:211.07px">30/9/2015 19:30:08</div>
<svg class="a" style="left:420.500px;top:221.74px" width="11" height="9" viewBox="0 0 11 9"><path d="M0.500 8.200L2 1.200H5.200L5.800 2.200H10.200L9.300 8.200z" fill="#f2eaa4" stroke="#cfc47a" stroke-width="0.5"/><path d="M0.700 8L2.100 2.400H4.800" fill="none" stroke="#4f4a2a" stroke-width="0.75"/></svg>
<div class="t rw nm" style="left:436.8px;top:221.74px">config</div>
<div class="t rw" style="left:686.4px;top:221.74px">30/9/2015 19:30:10</div>
<svg class="a" style="left:420.500px;top:232.4px" width="11" height="9" viewBox="0 0 11 9"><path d="M0.500 8.200L2 1.200H5.200L5.800 2.200H10.200L9.300 8.200z" fill="#f2eaa4" stroke="#cfc47a" stroke-width="0.5"/><path d="M0.700 8L2.100 2.400H4.800" fill="none" stroke="#4f4a2a" stroke-width="0.75"/></svg>
<div class="t rw nm" style="left:436.8px;top:232.40px">core</div>
<div class="t rw" style="left:686.4px;top:232.40px">30/9/2015 19:30:17</div>
<svg class="a" style="left:420.500px;top:243.07px" width="11" height="9" viewBox="0 0 11 9"><path d="M0.500 8.200L2 1.200H5.200L5.800 2.200H10.200L9.300 8.200z" fill="#f2eaa4" stroke="#cfc47a" stroke-width="0.5"/><path d="M0.700 8L2.100 2.400H4.800" fill="none" stroke="#4f4a2a" stroke-width="0.75"/></svg>
<div class="t rw nm" style="left:436.8px;top:243.07px">detail_meshes</div>
<div class="t rw" style="left:686.4px;top:243.07px">30/9/2015 19:30:27</div>
<svg class="a" style="left:420.500px;top:253.74px" width="11" height="9" viewBox="0 0 11 9"><path d="M0.500 8.200L2 1.200H5.200L5.800 2.200H10.200L9.300 8.200z" fill="#f2eaa4" stroke="#cfc47a" stroke-width="0.5"/><path d="M0.700 8L2.100 2.400H4.800" fill="none" stroke="#4f4a2a" stroke-width="0.75"/></svg>
<div class="t rw nm" style="left:436.8px;top:253.74px">editor</div>
<div class="t rw" style="left:686.4px;top:253.74px">30/9/2015 19:30:29</div>
<svg class="a" style="left:420.500px;top:264.4px" width="11" height="9" viewBox="0 0 11 9"><path d="M0.500 8.200L2 1.200H5.200L5.800 2.200H10.200L9.300 8.200z" fill="#f2eaa4" stroke="#cfc47a" stroke-width="0.5"/><path d="M0.700 8L2.100 2.400H4.800" fill="none" stroke="#4f4a2a" stroke-width="0.75"/></svg>
<div class="t rw nm" style="left:436.8px;top:264.40px">entities</div>
<div class="t rw" style="left:686.4px;top:264.40px">30/9/2015 19:40:02</div>
<svg class="a" style="left:420.500px;top:275.07px" width="11" height="9" viewBox="0 0 11 9"><path d="M0.500 8.200L2 1.200H5.200L5.800 2.200H10.200L9.300 8.200z" fill="#f2eaa4" stroke="#cfc47a" stroke-width="0.5"/><path d="M0.700 8L2.100 2.400H4.800" fill="none" stroke="#4f4a2a" stroke-width="0.75"/></svg>
<div class="t rw nm" style="left:436.8px;top:275.07px">fonts</div>
<div class="t rw" style="left:686.4px;top:275.07px">30/9/2015 19:40:58</div>
<svg class="a" style="left:420.500px;top:285.74px" width="11" height="9" viewBox="0 0 11 9"><path d="M0.500 8.200L2 1.200H5.200L5.800 2.200H10.200L9.300 8.200z" fill="#f2eaa4" stroke="#cfc47a" stroke-width="0.5"/><path d="M0.700 8L2.100 2.400H4.800" fill="none" stroke="#4f4a2a" stroke-width="0.75"/></svg>
<div class="t rw nm" style="left:436.8px;top:285.74px">graphics</div>
<div class="t rw" style="left:686.4px;top:285.74px">30/9/2015 19:41:16</div>
<svg class="a" style="left:420.500px;top:296.4px" width="11" height="9" viewBox="0 0 11 9"><path d="M0.500 8.200L2 1.200H5.200L5.800 2.200H10.200L9.300 8.200z" fill="#f2eaa4" stroke="#cfc47a" stroke-width="0.5"/><path d="M0.700 8L2.100 2.400H4.800" fill="none" stroke="#4f4a2a" stroke-width="0.75"/></svg>
<div class="t rw nm" style="left:436.8px;top:296.40px">gui</div>
<div class="t rw" style="left:686.4px;top:296.40px">30/9/2015 19:41:18</div>
<svg class="a" style="left:420.500px;top:307.07px" width="11" height="9" viewBox="0 0 11 9"><path d="M0.500 8.200L2 1.200H5.200L5.800 2.200H10.200L9.300 8.200z" fill="#f2eaa4" stroke="#cfc47a" stroke-width="0.5"/><path d="M0.700 8L2.100 2.400H4.800" fill="none" stroke="#4f4a2a" stroke-width="0.75"/></svg>
<div class="t rw nm" style="left:436.8px;top:307.07px">lang</div>
<div class="t rw" style="left:686.4px;top:307.07px">30/9/2015 19:41:18</div>
<svg class="a" style="left:420.500px;top:317.74px" width="11" height="9" viewBox="0 0 11 9"><path d="M0.500 8.200L2 1.200H5.200L5.800 2.200H10.200L9.300 8.200z" fill="#f2eaa4" stroke="#cfc47a" stroke-width="0.5"/><path d="M0.700 8L2.100 2.400H4.800" fill="none" stroke="#4f4a2a" stroke-width="0.75"/></svg>
<div class="t rw nm" style="left:436.8px;top:317.74px">lights</div>
<div class="t rw" style="left:686.4px;top:317.74px">30/9/2015 19:43:10</div>
<svg class="a" style="left:420.500px;top:328.41px" width="11" height="9" viewBox="0 0 11 9"><path d="M0.500 8.200L2 1.200H5.200L5.800 2.200H10.200L9.300 8.200z" fill="#f2eaa4" stroke="#cfc47a" stroke-width="0.5"/><path d="M0.700 8L2.100 2.400H4.800" fill="none" stroke="#4f4a2a" stroke-width="0.75"/></svg>
<div class="t rw nm" style="left:436.8px;top:328.41px">maps</div>
<div class="t rw" style="left:686.4px;top:328.41px">30/9/2015 19:44:38</div>
<svg class="a" style="left:420.500px;top:339.07px" width="11" height="9" viewBox="0 0 11 9"><path d="M0.500 8.200L2 1.200H5.200L5.800 2.200H10.200L9.300 8.200z" fill="#f2eaa4" stroke="#cfc47a" stroke-width="0.5"/><path d="M0.700 8L2.100 2.400H4.800" fill="none" stroke="#4f4a2a" stroke-width="0.75"/></svg>
<div class="t rw nm" style="left:436.8px;top:339.07px">music</div>
<div class="t rw" style="left:686.4px;top:339.07px">30/9/2015 19:45:15</div>
<svg class="a" style="left:420.500px;top:349.74px" width="11" height="9" viewBox="0 0 11 9"><path d="M0.500 8.200L2 1.200H5.200L5.800 2.200H10.200L9.300 8.200z" fill="#f2eaa4" stroke="#cfc47a" stroke-width="0.5"/><path d="M0.700 8L2.100 2.400H4.800" fill="none" stroke="#4f4a2a" stroke-width="0.75"/></svg>
<div class="t rw nm" style="left:436.8px;top:349.74px">particles</div>
<div class="t rw" style="left:686.4px;top:349.74px">30/9/2015 19:45:26</div>
<div class="a" style="left:420px;top:357px;width:362.200px;height:1px;background:#f6f5f2"></div>
<div class="a" style="left:403px;top:358px;width:395px;height:20px;background:#d5d2c8"></div>
<div class="a" style="left:769.300px;top:156.500px;width:11.900px;height:200.500px;background:#eae8e3"></div>
<div class="a sb" style="left:769.300px;top:156.500px;width:11.900px;height:11.300px"></div>
<svg class="a" style="left:769.300px;top:157.300px" width="11.900" height="11" viewBox="0 0 11.900 11"><path d="M2 8.200h6.800L5.400 3.700z" fill="#000"/></svg>
<div class="a sb" style="left:769.300px;top:167.800px;width:11.900px;height:157px"></div>
<div class="a sb" style="left:769.300px;top:345px;width:11.900px;height:12px"></div>
<svg class="a" style="left:769.300px;top:345px" width="11.900" height="12" viewBox="0 0 11.900 12"><path d="M2 4h6.800L5.400 8.500z" fill="#000"/></svg>
<div class="a sunk" style="left:421px;top:380px;width:266px;height:14px;background:#fff"></div>
<div class="a sunk" style="left:421px;top:397.5px;width:188px;height:13.5px;background:#fff"></div>
<div class="t" style="left:424px;top:400.400px;font-size:9px;letter-spacing:0.020px;-webkit-text-stroke:0.18px #000">HPL Map (*.hpm, *.map)</div>
<div class="a rais" style="left:608px;top:398px;width:12.5px;height:12.5px"></div>
<svg class="a" style="left:608px;top:398px" width="12.5" height="12.5" viewBox="0 0 12.5 12.5"><path d="M3 4.4h6.5L6.25 8.8z" fill="#000"/></svg>
<svg class="a" style="left:415px;top:390px" width="125" height="26" viewBox="415 390 125 26"><path d="M422.100 396.800C426 395.400 430 394.900 435 394.800L459 394.700C464 394.900 468 395.600 471 396.300C477 397.600 481 398.700 486 399.200C490 399.700 494 399.800 498 399.700L528 399.300C530.500 399.300 532 399.500 532.200 400.500C532.500 403 531.400 406 531.300 408.500C531.300 410 531.200 411 530.600 411.300L424 411.300C422.600 411.300 422.100 410.800 422.100 409.500Z" fill="none" stroke="#ed1c24" stroke-width="2.250" stroke-linejoin="round"/><path d="M497 398.500L509.500 397.400" fill="none" stroke="#ed1c24" stroke-width="1.900" stroke-linecap="round"/></svg>
<div class="a btn" style="left:734px;top:380.100px;width:46.800px;height:12.800px">Load file</div>
<div class="a btn" style="left:734px;top:397.200px;width:46.800px;height:12.600px">Cancel</div>
<div class="a" style="left:1024px;top:30px;width:256px;height:63px;background:#d2cfcb"></div>
<div class="a" style="left:1027.500px;top:34.800px;width:105.300px;height:53px;border:1px solid #bfc2c4;box-shadow:0.6px 0.6px 0 #f4f4f2"></div>
<div class="a" style="left:1038px;top:31px;width:65px;height:9px;background:#d2cfcb"></div>
<div class="t" style="left:1040.3px;top:31px;font-size:7.300px;font-weight:bold;letter-spacing:-0.3px;color:#111">Select Object Type</div>
<div class="a" style="left:1034px;top:42px;width:9px;height:9px;background:#fff;border:1px solid;border-color:#8a8880 #f4f3f0 #f4f3f0 #8a8880"></div>
<svg class="a" style="left:1034px;top:42px" width="9" height="9" viewBox="0 0 9 9"><path d="M1.6 4.4L3.6 6.6L7.4 1.8" fill="none" stroke="#000" stroke-width="1.5"/></svg>
<div class="t" style="left:1044.8px;top:44px;font-size:6.800px;font-weight:bold;letter-spacing:-0.3px">All</div>
<div class="a" style="left:1054.5px;top:42px;width:9px;height:9px;background:#fff;border:1px solid;border-color:#8a8880 #f4f3f0 #f4f3f0 #8a8880"></div>
<div class="t" style="left:1065.5px;top:44px;font-size:6.600px;font-weight:bold;letter-spacing:-0.4px">MultiSelect</div>
<div class="a ob" style="left:1034.2px;top:52.2px">Li</div>
<div class="a ob" style="left:1048.2px;top:52.2px">Li</div>
<div class="a ob" style="left:1062.2px;top:52.2px">Bi</div>
<div class="a ob" style="left:1076.2px;top:52.2px">Lo</div>
<div class="a ob" style="left:1090.2px;top:52.2px">Pa</div>
<div class="a ob" style="left:1104.2px;top:52.2px">So</div>
<div class="a ob" style="left:1118.2px;top:52.2px">St</div>
<div class="a ob" style="left:1034.2px;top:66.2px">En</div>
<div class="a ob" style="left:1048.2px;top:66.2px">Ar</div>
<div class="a ob" style="left:1062.2px;top:66.2px">Pr</div>
<div class="a ob" style="left:1076.2px;top:66.2px">De</div>
<div class="a ob" style="left:1090.2px;top:66.2px">Fo</div>
<div class="a ob" style="left:1104.2px;top:66.2px">St</div>
<div class="a ob" style="left:1118.2px;top:66.2px">Te</div>
<div class="a ob" style="left:1034.2px;top:80.2px">Un</div>
<div class="a ob" style="left:1048.2px;top:80.2px">Ex</div>
<div class="a ob" style="left:1062.2px;top:80.2px">De</div>
<div class="a ob" style="left:1076.2px;top:80.2px">Co</div>
<div class="a" style="left:25px;top:659px;width:998px;height:1px;background:#9a9892"></div>
<div class="a" style="left:25px;top:660px;width:999px;height:33px;background:#d2cfcb"></div>
<div class="a" style="left:30.5px;top:663px;width:130px;height:28px;border:1px solid #c6c7c7;box-shadow:0.6px 0.6px 0 #e2e1de"></div>
<div class="a" style="left:40px;top:659.5px;width:48px;height:7px;background:#d2cfcb"></div>
<div class="t" style="left:41.8px;top:659px;font-size:7.6px;font-weight:bold;letter-spacing:-0.28px;color:#111">Grid Controls</div>
<div class="a rb" style="left:32.5px;top:671px;width:15px;height:15px;color:#a6a39b;font-size:8px;line-height:13px;text-align:center;letter-spacing:-0.2px">XZ</div>
<div class="a pb" style="left:51px;top:670.5px;width:16.5px;height:16px"></div>
<svg class="a" style="left:51px;top:670.5px" width="16.5" height="16" viewBox="0 0 16.5 16"><path d="M2.200 14V9a6.050 6.050 0 0 1 12.100 0v5h-3.800V9a2.250 2.250 0 0 0-4.500 0v5z" fill="#ee3a3a"/><path d="M2.200 12h3.800v2H2.200zM10.500 12h3.800v2h-3.800z" fill="#fff"/></svg>
<div class="t lb" style="left:72.5px;top:667.5px">Height</div>
<div class="a sunk" style="left:72px;top:676px;width:27px;height:12.500px;background:#fff"></div>
<div class="t" style="left:75px;top:679px;font-size:7.5px">0</div>
<div class="t lb" style="left:108.5px;top:667.5px">Snap sep.</div>
<div class="a sunk" style="left:108.500px;top:676px;width:27px;height:12.500px;background:#fff"></div>
<div class="t" style="left:111.500px;top:679px;font-size:7.5px">0.25</div>
<div class="a rb" style="left:98.5px;top:676.2px;width:6.500px;height:6.200px"></div><div class="a rb" style="left:98.5px;top:682.4000000000001px;width:6.500px;height:6.200px"></div><svg class="a" style="left:98.5px;top:676.2px" width="6.5" height="12.4" viewBox="0 0 6.5 12.4"><path d="M1.500 3.200h3.500M3.250 1.400v3.600M2 9.500h2.500" stroke="#000" stroke-width="0.9"/></svg>
<div class="a rb" style="left:135px;top:676.2px;width:6.500px;height:6.200px"></div><div class="a rb" style="left:135px;top:682.4000000000001px;width:6.500px;height:6.200px"></div><svg class="a" style="left:135px;top:676.2px" width="6.5" height="12.4" viewBox="0 0 6.5 12.4"><path d="M1.500 3.200h3.500M3.250 1.400v3.600M2 9.500h2.500" stroke="#000" stroke-width="0.9"/></svg>
<div class="a" style="left:162.500px;top:663px;width:248px;height:28px;border:1px solid #c6c7c7;box-shadow:0.6px 0.6px 0 #e2e1de"></div>
<div class="a" style="left:239.500px;top:659.500px;width:40px;height:7px;background:#d2cfcb"></div>
<div class="t" style="left:240.800px;top:659px;font-size:7.6px;font-weight:bold;letter-spacing:-0.15px;color:#111">Clip planes</div>
<div class="a pb2" style="left:162.100px;top:663.100px;width:12.800px;height:12.800px;font-size:7.500px;font-weight:bold;line-height:12px;text-align:center">A</div>
<div class="a pb2" style="left:175.800px;top:663.100px;width:12.800px;height:12.800px;font-size:7.500px;font-weight:bold;line-height:12px;text-align:center;color:#8a8780">I</div>
<div class="a pb2" style="left:162.100px;top:677.200px;width:12.800px;height:12.800px;font-size:7.500px;font-weight:bold;line-height:12px;text-align:center">P</div>
<div class="a rb" style="left:189.400px;top:663.600px;width:25.600px;height:26px"></div>
<svg class="a" style="left:189.400px;top:663.600px" width="26" height="26" viewBox="189.400 663.600 26 26"><defs><linearGradient id="sq" x1="0" y1="0" x2="0.300" y2="1"><stop offset="0" stop-color="#ffffff"/><stop offset="1" stop-color="#e4e3e0"/></linearGradient></defs><rect x="191.800" y="665.600" width="10.900" height="10.700" rx="1.600" fill="#f6f5f2" stroke="#a8a59e" stroke-width="0.600"/><rect x="195.600" y="669.200" width="16.800" height="18.300" rx="2" fill="url(#sq)" stroke="#8f8c85" stroke-width="0.800"/></svg>
<div class="a pb2" style="left:214.900px;top:663.600px;width:13.200px;height:12.800px;font-size:7.500px;line-height:11.500px;text-align:center;color:#a6a39b">LT</div>
<div class="a rb" style="left:215.400px;top:676.800px;width:12.400px;height:12.800px;font-size:7.500px;font-weight:bold;line-height:11px;text-align:center">F</div>
<div class="a sunk" style="left:231.200px;top:673.300px;width:33.500px;height:12.700px;background:#fff"></div>
<div class="a rb" style="left:251px;top:673.600px;width:13.600px;height:12.300px"></div>
<svg class="a" style="left:251px;top:673.600px" width="13.600" height="12.300" viewBox="0 0 13.600 12.300"><path d="M3.300 4.200h6.800L6.700 8.700z" fill="#000"/></svg>
<div class="a rb" style="left:267.900px;top:667.200px;width:9.500px;height:9.200px;font-size:8px;line-height:6.500px;text-align:center">+</div>
<div class="a rb" style="left:267.900px;top:677.300px;width:9.500px;height:9.200px;font-size:8px;line-height:6px;text-align:center">-</div>
<div class="a rb" style="left:294.800px;top:669.800px;width:16.200px;height:16.500px;background:#dcdad0"></div>
<div class="t lb" style="left:315.500px;top:667.500px;color:#a6a39b;text-shadow:0.5px 0.5px 0 #f4f3f0">Height</div>
<div class="a sunk" style="left:315px;top:676px;width:27px;height:12.500px;background:#fff"></div>
<div class="t" style="left:318.500px;top:679px;font-size:7.5px;color:#666">0</div>
<div class="a rb" style="left:341.5px;top:676.2px;width:6.500px;height:6.200px"></div><div class="a rb" style="left:341.5px;top:682.4000000000001px;width:6.500px;height:6.200px"></div><svg class="a" style="left:341.5px;top:676.2px" width="6.5" height="12.4" viewBox="0 0 6.5 12.4"><path d="M1.500 3.200h3.500M3.250 1.400v3.600M2 9.500h2.500" stroke="#9a978f" stroke-width="0.9"/></svg>
<div class="a rb" style="left:351.500px;top:666.500px;width:16.500px;height:16.500px;background:#dcdad0"></div>
<div class="a" style="left:371.200px;top:666.800px;width:9.600px;height:9.200px;background:#e6e5e1;border:1px solid #d0cdc6"></div>
<div class="t lb" style="left:386px;top:667.500px;color:#a6a39b;text-shadow:0.5px 0.5px 0 #f4f3f0">Active</div>
<div class="a" style="left:0;top:693px;width:1280px;height:27px;background:#062a4e"></div>
<svg class="a" style="left:10px;top:701px" width="12" height="12" viewBox="0 0 12 12"><path d="M0.300 1.900L4.800 1.300V5.600H0.300zM5.500 1.200L11.300 0.400V5.600H5.500zM0.300 6.300H4.800V10.600L0.300 10zM5.500 6.300H11.300V11.500L5.500 10.700z" fill="#fff"/></svg>
<div class="a" style="left:32px;top:693px;width:229px;height:27px;background:#34546f"></div>
<svg class="a" style="left:37px;top:698.500px" width="16" height="16" viewBox="0 0 16 16"><circle cx="8" cy="8" r="6.100" fill="none" stroke="#fff" stroke-width="1.500"/></svg>
<div class="t" style="left:58.500px;top:701.800px;font-size:9.600px;color:#b4c0cc;letter-spacing:0.14px">Chiedimi qualcosa</div>
<svg class="a" style="left:243px;top:700px" width="9" height="14" viewBox="0 0 9 14"><rect x="2.600" y="0.800" width="3.800" height="7.600" rx="1.900" fill="none" stroke="#c6d0da" stroke-width="0.900"/><path d="M1 6.500a3.500 3.500 0 0 0 7 0M4.500 10v2M2.500 12.300h4" fill="none" stroke="#c6d0da" stroke-width="0.800"/></svg>
<svg class="a" style="left:269px;top:700px" width="17" height="13" viewBox="0 0 17 13"><rect x="4.300" y="2.600" width="8.400" height="7.800" fill="none" stroke="#fff" stroke-width="1"/><path d="M2.200 3.800v5.400M14.800 3.800v5.400" stroke="#fff" stroke-width="1"/></svg>
<svg class="a" style="left:303px;top:699px" width="15" height="15" viewBox="0 0 15 15"><path d="M1 7.200C1.600 3 4.500 0.800 7.900 0.800c4 0 6.200 2.900 6.200 6.400v1.500H5.300c.2 2 1.800 3 3.800 3 1.500 0 2.900-.4 4-1.100v2.700c-1.300.8-2.900 1.100-4.600 1.100-4.100 0-6.600-2.500-6.600-6 0-2.200 1.200-4 3-5-1.700.5-3.100 1.900-3.900 3.800zM5.400 6.200h5.200c0-1.600-1-2.700-2.500-2.700-1.400 0-2.500 1.100-2.700 2.700z" fill="#1e90ea"/></svg>
<svg class="a" style="left:335.500px;top:700px" width="16" height="14" viewBox="0 0 16 14"><path d="M0.500 1h5.500l1.200 1.600h8.300v10.400h-15z" fill="#f2c94e"/><path d="M0.500 4.200h15v8.800h-15z" fill="#f7dd7a"/><path d="M3.500 8h9v5h-9z" fill="#3fa9e6"/><path d="M5.500 10h5v3h-5z" fill="#f7dd7a"/></svg>
<svg class="a" style="left:368px;top:698.500px" width="15" height="16" viewBox="0 0 15 16"><path d="M4.600 4.500c0-4 5.800-4 5.800 0" fill="none" stroke="#fff" stroke-width="1"/><path d="M0.800 4.500h13.400v10.800h-13.400z" fill="#fff"/><path d="M4 7.300l3-.4v2.800h-3zM7.600 6.800l3.600-.5v3.400h-3.600zM4 10.300h3v2.800l-3-.4zM7.600 10.300h3.600v3.400l-3.600-.5z" fill="#062a4e"/></svg>
<div class="a" style="left:395.500px;top:693px;width:26.500px;height:27px;background:#2a6a52"></div>
<div class="a" style="left:395.500px;top:718.500px;width:26.500px;height:1.500px;background:#4fd43a"></div>
<div class="a" style="left:415.500px;top:693px;width:6.500px;height:25.500px;background:#24445c"></div>
<svg class="a" style="left:400px;top:698px" width="16" height="16" viewBox="0 0 16 16"><circle cx="8" cy="8" r="7.600" fill="#0e1c33"/><circle cx="10.300" cy="6" r="2.700" fill="none" stroke="#d8dde4" stroke-width="1.100"/><circle cx="10.300" cy="6" r="1.200" fill="#d8dde4"/><path d="M0.800 8.400L6 10.600" stroke="#d8dde4" stroke-width="2.200" stroke-linecap="round"/><circle cx="5.800" cy="10.800" r="1.900" fill="#0e1c33" stroke="#d8dde4" stroke-width="0.900"/><path d="M7.500 9.500l1.500-1.700" stroke="#d8dde4" stroke-width="1.400"/></svg>
<div class="a" style="left:425px;top:693px;width:32px;height:27px;background:#0b3e6e"></div>
<div class="a" style="left:425px;top:718.500px;width:32px;height:1.500px;background:#8cc2f0"></div>
<svg class="a" style="left:434px;top:701px" width="15" height="11" viewBox="0 0 15 11"><rect x="0.300" y="0.300" width="14.400" height="10.400" fill="#e6eaf0"/><rect x="1.300" y="1.700" width="4.700" height="7.600" fill="#1668d8"/><rect x="6.600" y="1.700" width="3.200" height="7.600" fill="#f4f6f8"/><path d="M10.600 2.500h3M10.600 4.500h3M10.600 6.500h3M10.600 8.500h3" stroke="#8a96a8" stroke-width="0.800"/></svg>
<svg class="a" style="left:465.500px;top:698.500px" width="16" height="16" viewBox="0 0 16 16"><circle cx="8" cy="8" r="7.600" fill="#1b86d8"/><path d="M1.500 8.500c2.500-2.200 5.500-2.600 8-2.200l3.500-2-1 2.800 2 .6-3.400 1c-1.600 2-4.600 2.600-6.500 1.400 1.600 0 2.600-.6 3.300-1.600-1.800.4-3.800.4-5.900 0z" fill="#fff"/></svg>
<svg class="a" style="left:498px;top:698px" width="17" height="17" viewBox="0 0 17 17"><path d="M4.500 0.800a4 4 0 0 1 3.400 1a6.300 6.300 0 0 1 7 7.200a4 4 0 0 1-5.600 6a6.300 6.300 0 0 1-7.400-7.400a4 4 0 0 1 2.600-6.800z" fill="#18aef0"/><text x="8.500" y="12.600" font-family="Liberation Sans,sans-serif" font-weight="bold" font-size="11.500" fill="#fff" text-anchor="middle">S</text></svg>
<div class="a" style="left:493px;top:718.500px;width:27px;height:1.500px;background:#8cc2f0"></div>
<svg class="a" style="left:1162px;top:700px" width="70" height="14" viewBox="0 0 70 14"><path d="M2.200 8.600L6 4.800l3.800 3.800" fill="none" stroke="#fff" stroke-width="0.900"/><path d="M19.800 3.200h7.500v6.200h-5.200M21.800 11.500h3.500" fill="none" stroke="#e8ecf0" stroke-width="0.900"/><path d="M18.200 2.200v9.500M17 3.200h2.500M17 5.700h2.500" stroke="#e8ecf0" stroke-width="0.900"/><path d="M33.500 5.600h1.600l2.400-2.300v8.400l-2.400-2.300h-1.600z" fill="none" stroke="#fff" stroke-width="0.800"/><path d="M39.200 5.200a3 3 0 0 1 0 4.600M40.800 3.600a5.300 5.300 0 0 1 0 7.800" fill="none" stroke="#fff" stroke-width="0.800"/><path d="M49.400 1.800h10.200v8h-3.400l-1.700 1.800-1.700-1.800h-3.400z" fill="#fff"/><path d="M51.300 4.200h6.400M51.300 6h6.400M51.300 7.800h4.500" stroke="#062a4e" stroke-width="0.800"/></svg>
<div class="t" style="left:1241.800px;top:696.300px;font-size:8.300px;color:#fff;letter-spacing:-0.100px">17:17</div>
<div class="t" style="left:1230.200px;top:707px;font-size:8.300px;color:#fff;letter-spacing:-0.250px">01/10/2015</div>
<div class="a" style="left:1276.500px;top:693px;width:1px;height:27px;background:#3a566f"></div>

</div></body></html>
